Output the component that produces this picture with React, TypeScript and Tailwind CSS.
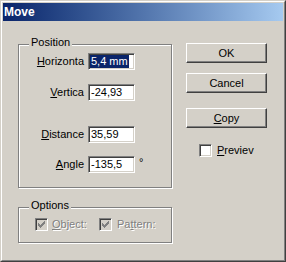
const FACE = 'bg-[#d4d0c8]';

function Sunken({ className = '', children }: { className?: string; children?: React.ReactNode }) {
  return (
    <div
      className={`border border-t-[#808080] border-l-[#808080] border-b-white border-r-white shadow-[inset_1px_1px_0_#404040,inset_-1px_-1px_0_#d4d0c8] ${className}`}
    >
      {children}
    </div>
  );
}

function Field({ label, u, value, selected, suffix, className = '' }: {
  label: string;
  u: number;
  value: string;
  selected?: boolean;
  suffix?: string;
  className?: string;
}) {
  return (
    <div className={`flex items-center ${className}`}>
      <div className="w-[69px] pr-[4px] text-right">
        {label.slice(0, u)}
        <span className="underline">{label[u]}</span>
        {label.slice(u + 1)}
      </div>
      <Sunken className="flex h-[17px] w-[47px] items-center bg-white pl-[1px]">
        <span className={selected ? 'bg-[#0a246a] px-px leading-[13px] text-white' : 'px-px'}>{value}</span>
      </Sunken>
      {suffix && <span className="-mt-[4px] ml-[4px]">{suffix}</span>}
    </div>
  );
}

function Group({ title, className = '', children }: { title: string; className?: string; children: React.ReactNode }) {
  return (
    <div
      className={`relative w-[154px] border border-[#808080] shadow-[inset_1px_1px_0_#fff,1px_1px_0_#fff] ${className}`}
    >
      <div className={`absolute -top-[9px] left-[10px] px-[2px] leading-[13px] ${FACE}`}>{title}</div>
      {children}
    </div>
  );
}

function Check({ checked, disabled }: { checked?: boolean; disabled?: boolean }) {
  return (
    <Sunken className={`flex h-[13px] w-[13px] items-center justify-center ${disabled ? FACE : 'bg-white'}`}>
      {checked && (
        <svg width="7" height="7" viewBox="0 0 7 7" shapeRendering="crispEdges">
          <path d="M0 2h1v1h1v1h1v-1h1v-1h1v-1h1v-1h1v3h-1v1h-1v1h-1v1h-1v1h-1v-1h-1v-1h-1z" fill={disabled ? '#808080' : '#000'} />
        </svg>
      )}
    </Sunken>
  );
}

function Button({ children, className = '' }: { children: React.ReactNode; className?: string }) {
  return (
    <div
      className={`flex h-[20px] w-[81px] items-center justify-center border border-t-white border-l-white border-b-[#404040] border-r-[#404040] shadow-[inset_-1px_-1px_0_#808080] ${className}`}
    >
      {children}
    </div>
  );
}

export default function App() {
  return (
    <div className="font-['Liberation_Sans',Arial,sans-serif] text-[11px] leading-[13px] text-black">
      <div className={`h-[262px] w-[286px] border border-t-[#d4d0c8] border-l-[#d4d0c8] border-b-[#404040] border-r-[#404040] ${FACE}`}>
        <div className="h-full border border-t-white border-l-white border-b-[#808080] border-r-[#808080] p-px">
          <div className="flex h-[18px] items-center bg-linear-to-r from-[#0a246a] to-[#a6caf0] pl-[1px] text-[12px] font-bold text-white">
            Move
          </div>

          <div className="flex pl-[15px]">
            <div className="flex flex-col">
              <Group title="Position" className="mt-[23px] h-[144px]">
                <Field className="mt-[8px]" label="Horizonta" u={0} value="5,4 mm" selected />
                <Field className="mt-[14px]" label="Vertica" u={0} value="-24,93" />
                <Field className="mt-[25px]" label="Distance" u={0} value="35,59" />
                <Field className="mt-[13px]" label="Angle" u={0} value="-135,5" suffix="°" />
              </Group>

              <Group title="Options" className="mt-[19px] h-[36px]">
                <div className="mt-[10px] flex pl-[16px] text-[#808080] [text-shadow:1px_1px_0_#fff]">
                  <div className="flex w-[64px] items-center gap-[4px]">
                    <Check checked disabled />
                    <span>
                      <span className="underline">O</span>bject:
                    </span>
                  </div>
                  <div className="flex items-center gap-[5px]">
                    <Check checked disabled />
                    <span>
                      Pa<span className="underline">t</span>tern:
                    </span>
                  </div>
                </div>
              </Group>
            </div>

            <div className="ml-[14px] flex flex-col">
              <Button className="mt-[22px]">OK</Button>
              <Button className="mt-[10px]">Cancel</Button>
              <Button className="mt-[15px]">
                <span>
                  <span className="underline">C</span>opy
                </span>
              </Button>
              <div className="ml-[13px] mt-[16px] flex items-center gap-[5px]">
                <Check />
                <span>
                  <span className="underline">P</span>reviev
                </span>
              </div>
            </div>
          </div>
        </div>
      </div>
    </div>
  );
}
